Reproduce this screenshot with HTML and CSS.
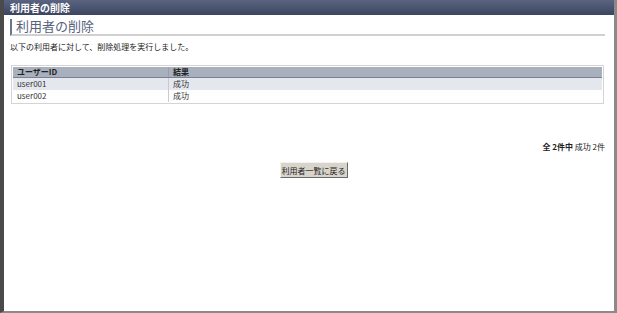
FILE: index.html
```html
<!DOCTYPE html>
<html lang="ja">
<head>
<meta charset="utf-8">
<link rel="stylesheet" href="styles.css">
</head>
<body>
<div class="window">
  <div class="titlebar">利用者の削除</div>
  <div class="content">
    <h1 class="heading">利用者の削除</h1>
    <p class="message">以下の利用者に対して、削除処理を実行しました。</p>
    <div class="tablebox">
      <table class="result">
        <thead>
          <tr><th class="col-id">ユーザーID</th><th>結果</th></tr>
        </thead>
        <tbody>
          <tr class="odd"><td>user001</td><td>成功</td></tr>
          <tr><td>user002</td><td>成功</td></tr>
        </tbody>
      </table>
    </div>
    <div class="summary"><b>全 2件中</b> 成功 2件</div>
    <div class="actions"><button class="btn">利用者一覧に戻る</button></div>
  </div>
</div>
</body>
</html>
```
FILE: styles.css
```css
html, body { margin: 0; padding: 0; background: #fff; }
body { font-family: "Noto Sans CJK JP", "Noto Sans", sans-serif; font-size: 8px; color: #222; }
.window {
  width: 617px; height: 313px; box-sizing: border-box;
  border-left: 4px solid #4a4a4a;
  border-right: 3px solid #8a8a8a;
  border-bottom: 2px solid #8a8a8a;
  display: flex; flex-direction: column;
}
.titlebar {
  height: 15px; line-height: 15px;
  background: linear-gradient(#5a6480, #3c4560);
  color: #fff; font-weight: bold; font-size: 10px;
  padding-left: 6px;
}
.content { padding: 4px 7px 0 6px; flex: 1; }
.heading {
  display: block;
  margin: 0 2px 0 0; font-weight: normal; font-size: 13px; color: #56627e;
  border-bottom: 2px solid #d0d0d0;
  border-left: 2px solid #6a7590;
  padding: 0 0 1px 4px; line-height: 14px;
}
.message { margin: 6px 0 0 0; font-size: 8px; line-height: 10px; }
.tablebox { margin: 13px 3px 0 1px; border: 1px solid #d4d4d4; padding: 1px; }
.result { width: 100%; border-collapse: collapse; font-size: 8px; }
.result th {
  background: #a8b0be; text-align: left; font-weight: bold; color: #222;
  height: 10px; line-height: 10px; padding: 0 4px;
  border-bottom: 1px solid #7a8290;
}
.result th + th, .result td + td { border-left: 1px solid #c8ccd2; }
.result th + th { border-left-color: #98a0ae; }
.result .col-id { width: 147px; }
.result td { height: 12px; line-height: 12px; padding: 0 4px; color: #333; }
.result tr.odd td { background: #e4e8ee; }
.summary { margin-top: 38px; text-align: right; padding-right: 2px; font-size: 8px; line-height: 10px; }
.actions { text-align: center; margin-top: 10px; padding-left: 10px; }
.btn {
  font-family: inherit; font-size: 8px; color: #222;
  background: #d8d4cc; border: 1px solid; border-color: #f4f2ee #6a6a6a #6a6a6a #f4f2ee;
  width: 68px; height: 16px; padding: 0; line-height: 13px;
}
```
